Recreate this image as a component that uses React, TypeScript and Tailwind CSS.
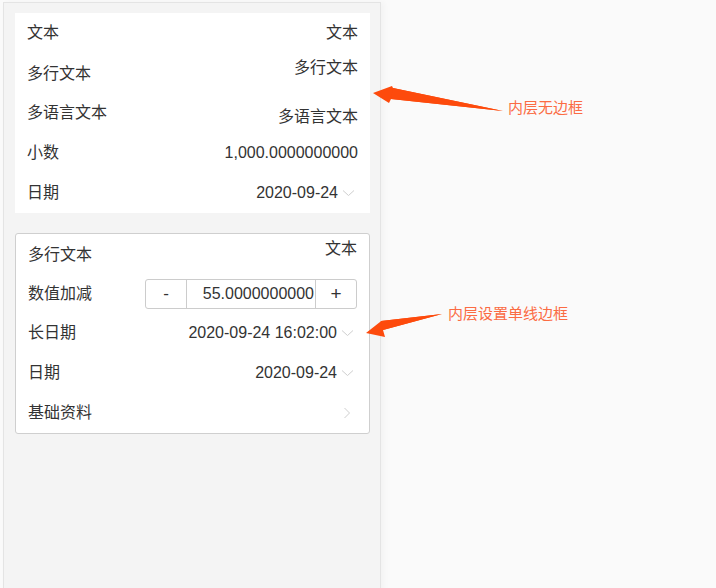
import React from 'react'

const font = { fontFamily: '"Liberation Sans", "Noto Sans CJK SC", sans-serif' }

// Thin grey chevrons used as field affordances
const ChevronDown = () => (
  <svg width="20" height="8" viewBox="0 0 20 8" className="shrink-0">
    <path d="M5 1.5 L10.5 6.5 L16 1.5" fill="none" stroke="#cfcfcf" strokeWidth="1" />
  </svg>
)

const ChevronRight = () => (
  <svg width="8" height="12" viewBox="0 0 8 12" className="shrink-0 mr-[6px]">
    <path d="M1.5 1 L6.5 6 L1.5 11" fill="none" stroke="#cfcfcf" strokeWidth="1" />
  </svg>
)

interface RowProps {
  label: string
  children: React.ReactNode
  align?: 'center' | 'top' | 'bottom'
}

const Row: React.FC<RowProps> = ({ label, children, align = 'center' }) => {
  const valueAlign =
    align === 'top' ? 'self-start pt-[4px]' : align === 'bottom' ? 'self-end pb-[5px]' : ''
  return (
    <div className="flex min-h-0 flex-1 items-center justify-between px-3 text-[16px] leading-[22px] text-[#333]">
      <span className={align === 'top' ? 'pt-[2px]' : ''}>{label}</span>
      <div className={`flex items-center ${valueAlign}`}>{children}</div>
    </div>
  )
}

const Stepper = () => (
  <div className="flex h-[30px] w-[212px] items-stretch rounded-[3px] border border-[#cccccc] text-[#333]">
    <button className="flex w-[41px] items-center justify-center border-r border-[#cccccc] text-[17px]">-</button>
    <div className="flex flex-1 items-center justify-end overflow-hidden pr-[1px] text-[16px] whitespace-nowrap">
      55.0000000000
    </div>
    <button className="flex w-[41px] items-center justify-center border-l border-[#cccccc] text-[19px]">+</button>
  </div>
)

const Annotations = () => (
  <>
    <svg className="pointer-events-none absolute left-0 top-0" width="716" height="588">
      {/* arrow to the borderless card */}
      <polygon points="503,111 393,88 392,86 373,93 389,103 391,99" fill="#fd4a0c" />
      <polygon points="503,111 391,99 393,88" fill="#fd4a0c" />
      {/* arrow to the bordered card */}
      <polygon points="442,314 381,321 380,322 366,333 385,337 383,330" fill="#fd4a0c" />
      <polygon points="442,314 383,330 381,321" fill="#fd4a0c" />
    </svg>
    <span className="absolute left-[508px] top-[100px] text-[15px] leading-[16px] text-[#fb6b43]">内层无边框</span>
    <span className="absolute left-[448px] top-[306px] text-[15px] leading-[16px] text-[#fb6b43]">内层设置单线边框</span>
  </>
)

export default function App() {
  return (
    <div className="relative h-[588px] w-[716px] overflow-hidden bg-[#fafafa] pl-[3px] pt-[2px]" style={font}>
      <div className="flex h-[600px] w-[378px] flex-col gap-[20px] border border-[#e4e4e4] bg-[#f4f4f4] px-[11px] pt-[10px] shadow-[3px_0_6px_rgba(0,0,0,0.03)]">
        <div className="flex h-[200px] w-[355px] flex-col bg-white">
          <Row label="文本">文本</Row>
          <Row label="多行文本" align="top">多行文本</Row>
          <Row label="多语言文本" align="bottom">多语言文本</Row>
          <Row label="小数">1,000.0000000000</Row>
          <Row label="日期">
            2020-09-24
            <ChevronDown />
          </Row>
        </div>

        <div className="flex h-[201px] w-[355px] flex-col rounded-[3px] border border-[#cfcfcf] bg-white">
          <Row label="多行文本" align="top">文本</Row>
          <Row label="数值加减">
            <Stepper />
          </Row>
          <Row label="长日期">
            2020-09-24 16:02:00
            <ChevronDown />
          </Row>
          <Row label="日期">
            2020-09-24
            <ChevronDown />
          </Row>
          <Row label="基础资料">
            <ChevronRight />
          </Row>
        </div>
      </div>
      <Annotations />
    </div>
  )
}
